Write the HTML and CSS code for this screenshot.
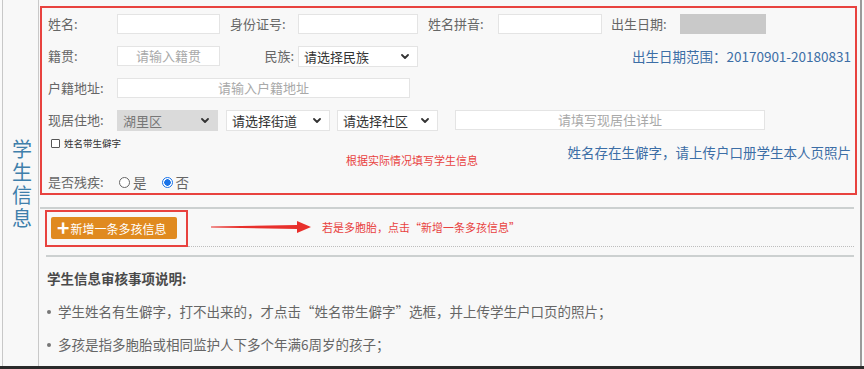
FILE: index.html
```html
<!DOCTYPE html>
<html lang="zh-CN">
<head>
<meta charset="utf-8">
<title>学生信息</title>
<link rel="stylesheet" href="styles.css">
</head>
<body>
<div class="page">
  <div class="frame">
    <div class="side"><span class="side-text">学生信息</span></div>
    <div class="main">
      <div class="form-box">
        <div class="row">
          <span class="lbl w69">姓名:</span><span class="inp w103"></span>
          <span class="lbl w68 ml10">身份证号:</span><span class="inp w120"></span>
          <span class="lbl w70 ml10">姓名拼音:</span><span class="inp w104"></span>
          <span class="lbl w69 ml9">出生日期:</span><span class="datebox"></span>
        </div>
        <div class="row">
          <span class="lbl w69">籍贯:</span><span class="inp w103 ph">请输入籍贯</span>
          <span class="lbl lbl-right w78">民族:</span>
          <span class="sel w120"><span class="sel-text">请选择民族</span><svg class="chev" viewBox="0 0 8 5" width="8" height="5"><polyline points="1,1 4,4 7,1"/></svg></span>
          <span class="note-blue push-right">出生日期范围：20170901-20180831</span>
        </div>
        <div class="row">
          <span class="lbl w69">户籍地址:</span><span class="inp w293 ph">请输入户籍地址</span>
        </div>
        <div class="row">
          <span class="lbl w69">现居住地:</span>
          <span class="sel sel-disabled w101"><span class="sel-text">湖里区</span><svg class="chev" viewBox="0 0 8 5" width="8" height="5"><polyline points="1,1 4,4 7,1"/></svg></span>
          <span class="sel w104 ml8"><span class="sel-text">请选择街道</span><svg class="chev" viewBox="0 0 8 5" width="8" height="5"><polyline points="1,1 4,4 7,1"/></svg></span>
          <span class="sel w101 ml7"><span class="sel-text">请选择社区</span><svg class="chev" viewBox="0 0 8 5" width="8" height="5"><polyline points="1,1 4,4 7,1"/></svg></span>
          <span class="inp w310 ml17 ph">请填写现居住详址</span>
        </div>
        <div class="row-check">
          <span class="check"><span class="checkbox"></span><span class="check-label">姓名带生僻字</span></span>
          <span class="note-blue note-rare">姓名存在生僻字，请上传户口册学生本人页照片</span>
        </div>
        <div class="row-radio">
          <span class="lbl w69">是否残疾:</span>
          <span class="radio"></span><span class="radio-label">是</span>
          <span class="radio radio-on"></span><span class="radio-label">否</span>
        </div>
        <span class="anno anno-form">根据实际情况填写学生信息</span>
      </div>

      <div class="multi">
        <div class="multi-row">
          <div class="btn-box"><span class="btn"><span class="plus">+</span>新增一条多孩信息</span></div>
          <div class="multi-rest"></div>
        </div>
        <svg class="arrow" viewBox="0 0 100 14" width="100" height="14"><polygon points="0,6.5 86,5 86,1 100,7 86,13 86,9 0,7.5"/></svg>
        <span class="anno anno-multi">若是多胞胎，点击“新增一条多孩信息”</span>
      </div>

      <div class="notes">
        <div class="notes-title">学生信息审核事项说明:</div>
        <div class="bullet"><span class="dot"></span>学生姓名有生僻字，打不出来的，才点击“姓名带生僻字”选框，并上传学生户口页的照片；</div>
        <div class="bullet"><span class="dot"></span>多孩是指多胞胎或相同监护人下多个年满6周岁的孩子；</div>
      </div>
    </div>
  </div>
  <div class="bottom-bar"></div>
</div>
</body>
</html>
```

FILE: styles.css
```css
* { box-sizing: border-box; }
html, body { margin: 0; padding: 0; }
body {
  background: #fafafa;
  font-family: "Noto Sans CJK SC", "Noto Sans", sans-serif;
  color: #666;
  width: 864px;
  height: 369px;
  overflow: hidden;
}
.page { width: 864px; height: 369px; display: flex; flex-direction: column; }
.frame {
  display: flex;
  height: 366px;
  margin-left: 2px;
  width: 860px;
  border-left: 1px solid #c8c8c8;
  border-right: 2px solid #9a9a9a;
  background: #f8f8f8;
}
.bottom-bar { height: 3px; background: #2a2a2a; }

.side {
  width: 36px;
  border-right: 1px solid #c9c9c9;
  display: flex;
  align-items: center;
  justify-content: center;
  padding-left: 2px;
}
.side-text {
  writing-mode: vertical-rl;
  text-orientation: upright;
  color: #3f7fab;
  font-size: 20px;
  line-height: 24px;
  letter-spacing: 3px;
  margin-top: 3px;
}
.main { flex: 1; position: relative; }

.form-box {
  position: relative;
  margin-top: 6px;
  margin-left: 1px;
  width: 817px;
  height: 189px;
  border: 2px solid #e8423f;
  padding: 6px 4px 0 6px;
}
.row { display: flex; align-items: center; height: 20px; margin-bottom: 12px; }
.lbl { font-size: 13px; line-height: 20px; color: #666; flex: none; white-space: nowrap; }
.lbl-right { text-align: right; padding-right: 4px; }
.w68 { width: 68px; } .w69 { width: 69px; } .w70 { width: 70px; } .w78 { width: 78px; }
.w101 { width: 101px; } .w103 { width: 103px; } .w104 { width: 104px; }
.w120 { width: 120px; } .w293 { width: 293px; } .w310 { width: 310px; }
.ml7 { margin-left: 7px; } .ml8 { margin-left: 8px; } .ml9 { margin-left: 9px; }
.ml10 { margin-left: 10px; } .ml17 { margin-left: 17px; }

.inp {
  height: 20px;
  flex: none;
  background: #fff;
  border: 1px solid #e4e4e4;
  font-size: 13px;
  line-height: 18px;
}
.ph { color: #a9a9a9; text-align: center; }
.datebox { width: 86px; height: 20px; background: #c9c9c9; flex: none; }

.sel {
  height: 21px;
  flex: none;
  display: flex;
  align-items: center;
  justify-content: space-between;
  background: #fff;
  border: 1px solid #e4e4e4;
  padding: 0 8px 0 5px;
  font-size: 13px;
  color: #333;
}
.sel-disabled { background: #dadada; border-color: #dadada; color: #777; }
.sel-text { line-height: 19px; }
.chev { fill: none; stroke: #333; stroke-width: 1.8; stroke-linecap: round; stroke-linejoin: round; }

.note-blue { color: #3c6ea6; font-size: 13.5px; line-height: 20px; white-space: nowrap; }
.push-right { margin-left: auto; }

.row-check { display: flex; align-items: flex-start; height: 26px; margin-top: -6px; }
.check { display: flex; align-items: center; height: 14px; padding-left: 3px; }
.checkbox { width: 9px; height: 9px; border: 1px solid #555; border-radius: 1px; background: #fff; }
.check-label { font-size: 9.5px; color: #333; margin-left: 4px; line-height: 14px; }
.note-rare { margin-left: auto; margin-top: 6px; }

.row-radio { display: flex; align-items: center; height: 18px; margin-top: 11px; }
.radio {
  width: 11px; height: 11px; border-radius: 50%;
  border: 1px solid #666; background: #fff;
  margin-left: 2px;
  flex: none;
}
.radio-on { border: 1px solid #1a73e8; background: radial-gradient(circle, #1a73e8 0 3px, #fff 3.5px); margin-left: 15px; }
.radio-label { font-size: 13.5px; color: #666; margin-left: 3px; line-height: 18px; }

.anno { position: absolute; color: #e8423f; font-size: 11px; line-height: 14px; white-space: nowrap; }
.anno-form { left: 304px; top: 145px; }

.multi {
  position: relative;
  margin-top: 12px;
  margin-left: 1px;
  margin-right: 6px;
  border-top: 2px solid #ccd0d0;
}
.multi-row { display: flex; align-items: stretch; padding-top: 1px; }
.btn-box {
  margin-left: 5px;
  border: 2px solid #e8423f;
  padding: 5px 9px 6px 4px;
  flex: none;
}
.btn {
  display: flex;
  align-items: center;
  width: 126px;
  height: 22px;
  background: #e08a1f;
  border-radius: 2px;
  color: #fff;
  font-size: 12px;
  padding-left: 6px;
}
.plus { font-size: 21px; font-weight: bold; line-height: 20px; margin-right: 1px; margin-top: -2px; }
.multi-rest { flex: 1; border-bottom: 1px dotted #bdbdbd; }
.arrow { position: absolute; left: 171px; top: 11px; fill: #e8302c; }
.anno-multi { left: 282px; top: 11px; }

.notes {
  margin-left: 7px;
  margin-right: 6px;
  margin-top: 8px;
  border-top: 2px solid #ccd0d0;
  padding-top: 5px;
  padding-left: 1px;
}
.notes-title { font-size: 13.5px; font-weight: bold; color: #4a4a4a; line-height: 33px; }
.bullet { display: flex; align-items: center; font-size: 13.5px; color: #666; line-height: 33px; white-space: nowrap; }
.dot { width: 4px; height: 4px; border-radius: 50%; background: #777; margin-right: 7px; flex: none; }
```
